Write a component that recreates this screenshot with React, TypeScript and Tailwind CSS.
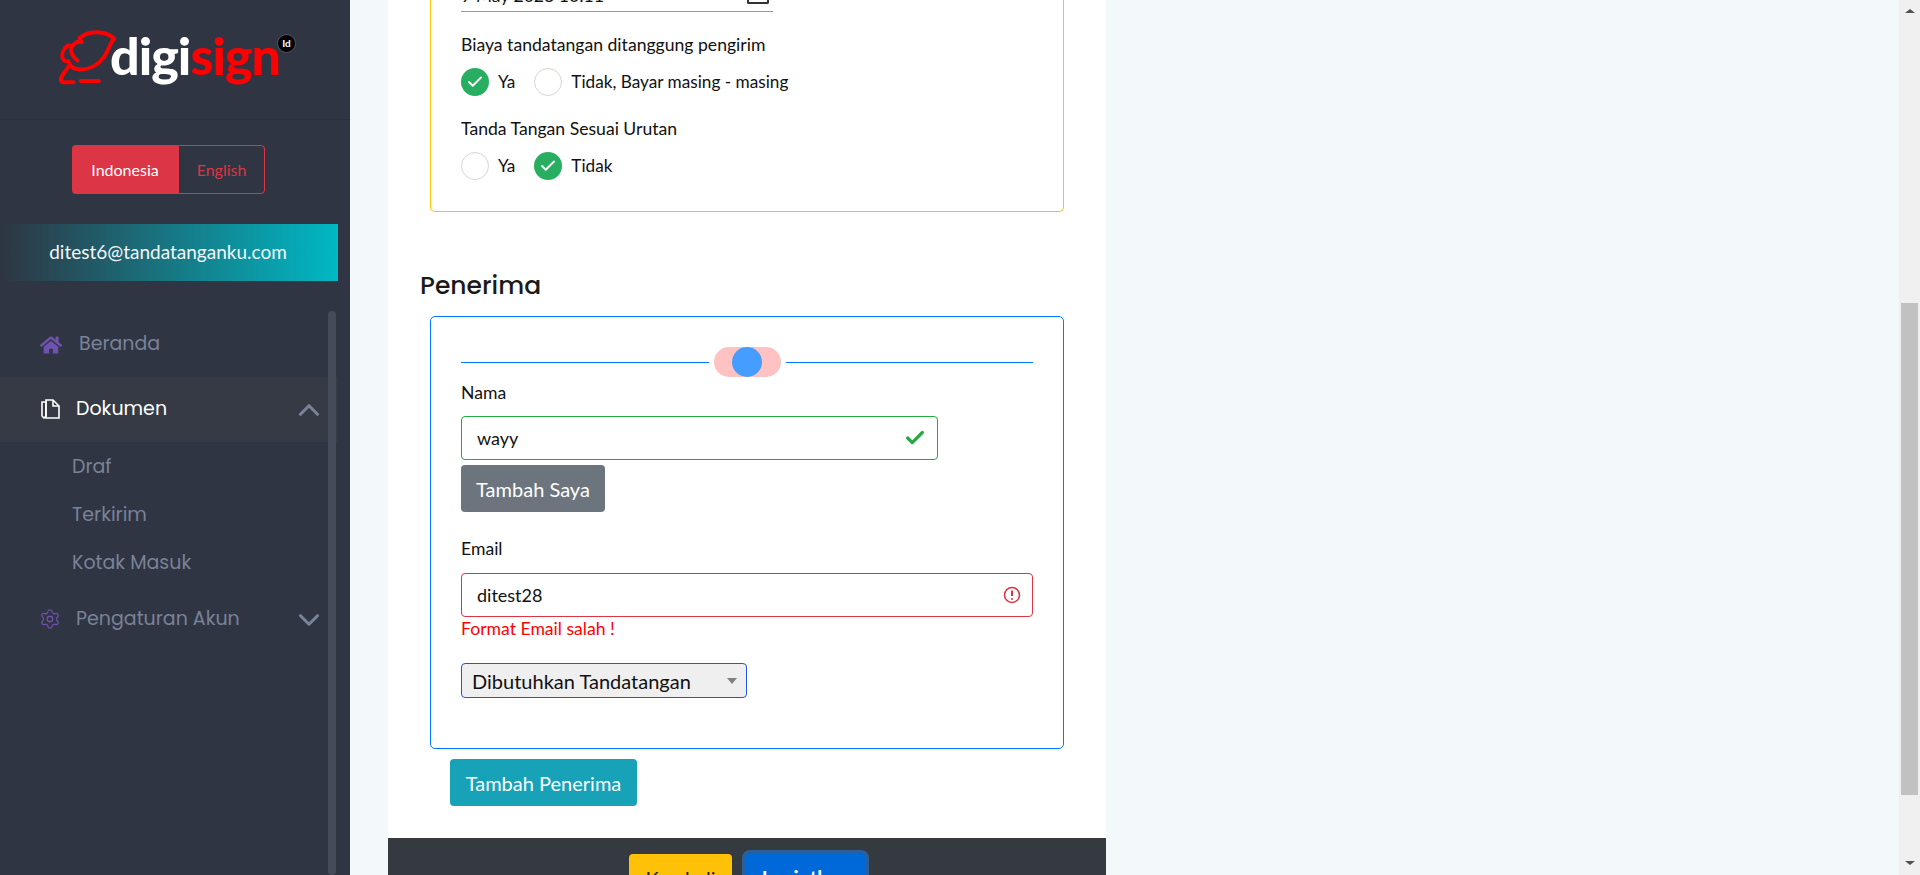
import { Check, ChevronDown, ChevronUp, Settings } from "lucide-react";
import { FaHome } from "react-icons/fa";

const poppins = "font-['Poppins','Inter','Noto_Sans',sans-serif]";

function Logo() {
  return (
    <div className="relative flex h-[120px] items-start border-b border-[#2b303c] pl-[57px] pt-[28px]">
      <svg width="63" height="58" viewBox="50 40 190 175" fill="none" stroke="#ff0000" strokeWidth="12" strokeLinecap="round" strokeLinejoin="round" className="shrink-0">
        <path d="M222 72 C205 55 175 50 150 55 C135 57 125 65 118 70 L125 82 C110 80 100 88 96 96 L84 92 C72 100 64 115 66 128 C68 138 76 142 84 140 L90 152" />
        <path d="M222 72 C210 85 205 110 190 130 C175 150 150 165 125 165 C105 165 95 160 88 152 C78 165 72 175 65 185 C58 198 62 205 75 204 L100 204" />
        <path d="M92 100 C92 115 100 130 112 138 M122 200 H176" />
      </svg>
      <div className="-ml-[10px] -mt-[9px] font-['Lato'] text-[52px] leading-[72px] font-black tracking-[-1px] text-white">
        digi<span className="text-[#ff0000]">sign</span>
      </div>
      <div className="absolute left-[277px] top-[34px] flex h-[19px] w-[19px] items-center justify-center rounded-full border border-[#555] bg-black font-['Lato'] text-[10px] font-bold text-white">
        Id
      </div>
    </div>
  );
}

function Sidebar() {
  return (
    <aside className="relative h-[875px] w-[350px] shrink-0 overflow-hidden bg-[#2f3542]">
      <Logo />
      <div className="ml-[72px] mt-[25px] flex h-[49px] w-[193px] text-[16px]">
        <div className="flex w-[106px] items-center justify-center rounded-l-[4px] bg-[#dc3545] text-white">Indonesia</div>
        <div className="flex flex-1 items-center justify-center rounded-r-[4px] border border-[#dc3545] text-[#dc3545]">English</div>
      </div>
      <div className="mt-[30px] flex h-[57px] w-[338px] items-center justify-center bg-linear-to-r/srgb from-[#2f3542] to-[#00b8c4] pr-[2px] text-[19px] text-[#f4f6f8]">
        ditest6@tandatanganku.com
      </div>
      <nav className={`mt-[31px] w-[338px] text-[19px] text-[#7a8299] ${poppins}`}>
        <div className="flex h-[65px] items-center pl-[40px]">
          <FaHome size={22} color="#6f52ad" />
          <span className="ml-[17px]">Beranda</span>
        </div>
        <div className="flex h-[65px] items-center bg-[#363a44] pl-[40px] pr-[12px] text-white">
          <svg width="20" height="21" viewBox="0 0 20 21" fill="none" stroke="#fff" strokeWidth="1.6" className="-mt-[3px]">
            <path d="M6 2 H13 L19 8 V20 H6 Z M13 2 V8 H19" />
            <path d="M2 4 H6 V18 L4 20 L2 18 Z" />
          </svg>
          <span className="ml-[16px] flex-1">Dokumen</span>
          <ChevronUp size={34} strokeWidth={2.2} className="text-[#7a8299]" />
        </div>
        <div className="flex h-[48px] items-center pl-[72px] pt-[2px]">Draf</div>
        <div className="flex h-[48px] items-center pl-[72px] pt-[2px]">Terkirim</div>
        <div className="flex h-[49px] items-center pl-[72px] pt-[2px]">Kotak Masuk</div>
        <div className="flex h-[65px] items-center pl-[40px] pr-[12px]">
          <Settings size={22} stroke="#6f52ad" strokeWidth={1.4} className="-ml-[1px] -mt-[2px]" />
          <span className="ml-[15px] flex-1">Pengaturan Akun</span>
          <ChevronDown size={34} strokeWidth={2.2} />
        </div>
      </nav>
      <div className="absolute left-[328px] top-[311px] h-[564px] w-[8px] rounded-full bg-[#454b58]" />
    </aside>
  );
}

function Radio({ checked, label }: { checked?: boolean; label: string }) {
  return (
    <div className="flex items-center">
      {checked ? (
        <div className="flex h-[28px] w-[28px] items-center justify-center rounded-full bg-[#27ae60]">
          <Check size={18} strokeWidth={2.5} className="text-white" />
        </div>
      ) : (
        <div className="h-[28px] w-[28px] rounded-full border border-[#d8d6d0] bg-white" />
      )}
      <span className="ml-[9px] text-[17.2px]">{label}</span>
    </div>
  );
}

function ErrorIcon() {
  return (
    <svg width="18" height="18" viewBox="0 0 18 18" fill="none" stroke="#dc3545" strokeWidth="1.6">
      <circle cx="9" cy="9" r="7.5" />
      <path d="M9 4.6 V10" strokeWidth="2" />
      <circle cx="9" cy="12.9" r="1" fill="#dc3545" stroke="none" />
    </svg>
  );
}

function Form() {
  return (
    <main className="ml-[38px] h-[875px] w-[718px] shrink-0 overflow-hidden bg-white font-['Lato'] text-[#111]">
      <div className="ml-[42px] h-[212px] w-[634px] rounded-b-[5px] border border-t-0 border-[#ffc107] px-[30px]">
        <div className="flex h-[12px] w-[312px] items-start justify-between overflow-hidden border-b border-[#999] pr-[4px]">
          <span className="-mt-[14px] text-[17.6px] leading-[20px]">9 May 2023 10:11</span>
          <span className="h-[4px] w-[22px] rounded-b-[2px] border-2 border-t-0 border-[#333]" />
        </div>
        <p className="mt-[23px] text-[17.6px] leading-[20px]">Biaya tandatangan ditanggung pengirim</p>
        <div className="mt-[13px] flex gap-[19px]">
          <Radio checked label="Ya" />
          <Radio label="Tidak, Bayar masing - masing" />
        </div>
        <p className="mt-[23px] text-[17.6px] leading-[20px]">Tanda Tangan Sesuai Urutan</p>
        <div className="mt-[13px] flex gap-[19px]">
          <Radio label="Ya" />
          <Radio checked label="Tidak" />
        </div>
      </div>

      <h2 className={`ml-[32px] mt-[56px] text-[25px] leading-[36px] font-medium text-[#1a1a1a] ${poppins}`}>Penerima</h2>

      <section className="ml-[42px] mt-[12px] h-[433px] w-[634px] rounded-[5px] border border-[#007bff] px-[30px]">
        <div className="mt-[30px] flex h-[30px] items-center">
          <div className="h-px flex-1 bg-[#007bff]" />
          <div className="mx-[5px] flex h-[30px] w-[67px] items-center justify-center rounded-full bg-[#ffc2c2]">
            <div className="h-[30px] w-[30px] rounded-full bg-[#459eff]" />
          </div>
          <div className="h-px flex-1 bg-[#007bff]" />
        </div>
        <label className="mt-[4px] block text-[17.6px] leading-[24px]">Nama</label>
        <div className="mt-[11px] flex h-[44px] w-[477px] items-center rounded-[4px] border border-[#28a745] pl-[15px] pr-[11px] text-[18px]">
          <span className="flex-1">wayy</span>
          <Check size={22} strokeWidth={3.5} className="text-[#28a745]" />
        </div>
        <button className="mt-[5px] h-[47px] w-[144px] rounded-[4px] bg-[#6c757d] text-[20px] text-white">Tambah Saya</button>
        <label className="mt-[25px] block text-[17.6px] leading-[24px]">Email</label>
        <div className="mt-[12px] flex h-[44px] items-center rounded-[4px] border border-[#dc3545] pl-[15px] pr-[11px] text-[18px]">
          <span className="flex-1">ditest28</span>
          <ErrorIcon />
        </div>
        <p className="text-[17.6px] leading-[24px] text-[#ff0000]">Format Email salah !</p>
        <div className="mt-[22px] flex h-[35px] w-[286px] items-center rounded-[4px] border border-[#1f56e0] bg-[#efefef] pl-[10px] pr-[9px] text-[20px]">
          <span className="flex-1">Dibutuhkan Tandatangan</span>
          <span className="h-0 w-0 border-x-[5px] border-t-[6px] border-x-transparent border-t-[#808080]" />
        </div>
      </section>

      <button className="ml-[62px] mt-[10px] h-[47px] w-[187px] rounded-[4px] bg-[#17a2b8] text-[20px] text-white">Tambah Penerima</button>

      <footer className="mt-[32px] flex h-[37px] justify-center gap-[14px] overflow-hidden bg-[#343a40] pt-[16px]">
        <button className="h-[47px] w-[103px] shrink-0 rounded-[4px] bg-[#ffc107] text-[20px] text-[#212529]">Kembali</button>
        <button className="h-[47px] w-[119px] shrink-0 rounded-[4px] bg-[#0069d9] text-[20px] font-bold text-white ring-4 ring-[#2a5f9e]">Lanjutkan</button>
      </footer>
    </main>
  );
}

function Scrollbar() {
  return (
    <div className="flex h-[875px] w-[21px] shrink-0 flex-col items-center bg-[#f0f0f0]">
      <div className="mt-[9px] h-0 w-0 shrink-0 border-x-[5px] border-b-[4px] border-x-transparent border-b-[#505050]" />
      <div className="mt-[290px] h-[492px] w-[17px] shrink-0 bg-[#c1c1c1]" />
      <div className="mt-[66px] h-0 w-0 shrink-0 border-x-[5px] border-t-[4px] border-x-transparent border-t-[#505050]" />
    </div>
  );
}

export default function App() {
  return (
    <div className="flex h-[875px] w-[1920px] overflow-hidden bg-[#f3f8fb] font-['Lato',sans-serif]">
      <Sidebar />
      <Form />
      <div className="flex-1" />
      <Scrollbar />
    </div>
  );
}
